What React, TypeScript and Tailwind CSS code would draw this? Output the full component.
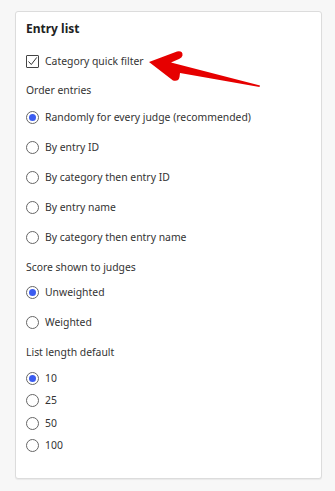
import React from "react";

function Radio({ checked, label }: { checked?: boolean; label: string }) {
  return (
    <div className="flex items-center h-[20px]">
      <span className="w-[13px] h-[13px] rounded-full border border-[#666] bg-white flex items-center justify-center shrink-0">
        {checked && <span className="w-[7px] h-[7px] rounded-full bg-[#3b5cf0]" />}
      </span>
      <span className="ml-[6px] text-[10.4px] text-[#333] leading-none">{label}</span>
    </div>
  );
}

export default function App() {
  return (
    <div
      className="w-[335px] h-[491px] bg-[#f7f7f7] relative pt-[11px] pl-[15px]"
      style={{ fontFamily: '"Noto Sans", "Open Sans", sans-serif' }}
    >
      <div className="w-[307px] h-[468px] bg-white border border-[#dcdcdc] rounded-[3px] shadow-[0_1px_1px_rgba(0,0,0,0.06)] pt-[9px] pl-[10px] flex flex-col">
        <div className="h-[16px] flex items-center text-[12px] font-bold text-[#222] leading-none">Entry list</div>
        <div className="mt-[14px] h-[20px] flex items-center">
          <span className="w-[13px] h-[13px] border border-[#444] rounded-[1px] flex items-center justify-center shrink-0">
            <svg width="11" height="11" viewBox="0 0 11 11">
              <path d="M1.5 5.5 L4.3 8.5 L9.8 1.4" fill="none" stroke="#333" strokeWidth="1" />
            </svg>
          </span>
          <span className="ml-[6px] text-[10.4px] text-[#333] leading-none">Category quick filter</span>
        </div>
        <div className="mt-[9px] h-[20px] flex items-center text-[10.4px] text-[#333] leading-none">Order entries</div>
        <div className="mt-[7px] flex flex-col gap-[10px]">
          <Radio checked label="Randomly for every judge (recommended)" />
          <Radio label="By entry ID" />
          <Radio label="By category then entry ID" />
          <Radio label="By entry name" />
          <Radio label="By category then entry name" />
        </div>
        <div className="mt-[10px] h-[20px] flex items-center text-[10.4px] text-[#333] leading-none">Score shown to judges</div>
        <div className="mt-[5px] flex flex-col gap-[10px]">
          <Radio checked label="Unweighted" />
          <Radio label="Weighted" />
        </div>
        <div className="mt-[10px] h-[20px] flex items-center text-[10.4px] text-[#333] leading-none">List length default</div>
        <div className="mt-[6px] flex flex-col gap-[2.5px]">
          <Radio checked label="10" />
          <Radio label="25" />
          <Radio label="50" />
          <Radio label="100" />
        </div>
      </div>
      <svg className="absolute left-0 top-0 pointer-events-none" width="335" height="491" viewBox="0 0 335 491">
        <path
          d="M149 62 L177 51.5 Q183 50.5 182.5 55.5 Q182 57.5 179 59 L171 62.5 L260 85.5 L259.5 87 L180 73 L179.5 77 Q178.5 82 173 80.5 Z"
          fill="#e60000"
        />
      </svg>
    </div>
  );
}
